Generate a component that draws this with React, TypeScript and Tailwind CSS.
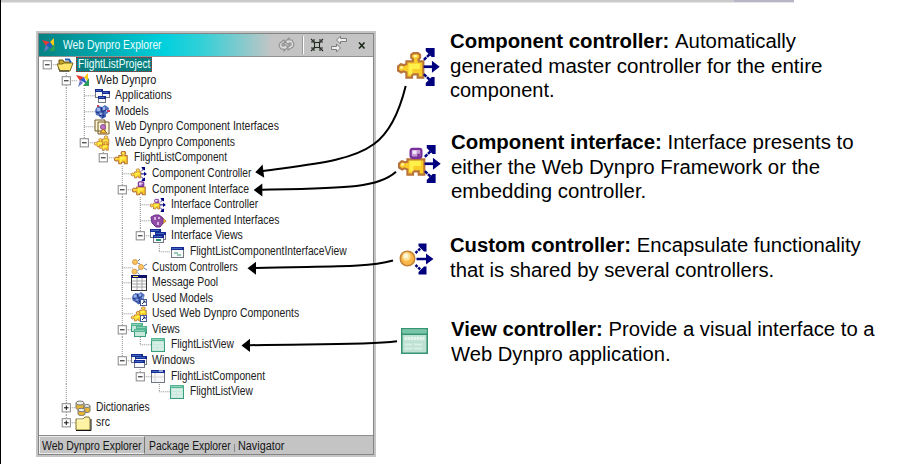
import React from "react";

type IconName =
  | "logo" | "folderOpen" | "apps" | "models" | "interfaces" | "components" | "component"
  | "controller" | "compInterface" | "ifController" | "implemented" | "ifViews" | "ifView"
  | "custom" | "pool" | "usedModels" | "usedComponents" | "views" | "view" | "windows"
  | "window" | "dictionaries" | "folder";

const NAVY = "#00007f";

function ControllerArrows() {
  return (
    <g stroke={NAVY} fill={NAVY}>
      <path d="M9.9 6.9h4" strokeWidth="1" />
      <path d="M13 4.7l2.9 2.2L13 9.1z" stroke="none" />
      <path d="M10 4.4l2.8-2.8M10 9.6l2.8 2.8" fill="none" strokeWidth=".9" strokeDasharray="1.3 .35" />
      <path d="M10.7 0H14v3.3h-1.1l-2.2-2.2zM10.7 14H14v-3.3h-1.1l-2.2 2.2z" stroke="none" />
    </g>
  );
}

function Puzzle({ purple = false }: { purple?: boolean }) {
  return (
    <g>
      <path
        d={purple
          ? "M3.5 5.3h6.3v5.6H7.7V9.7H5.6v1.2H3.5V9L2.4 8.6l-.8.4-1.2-.7V6.8l1-.8 1.1.3 1-.1z"
          : "M3.5 4.9h2.4l.1-.7L5.3 3.6V2.5l.8-.6h1.7l.8.6v1.1l-.6.6.1.7h1.7v6H7.7V9.7H5.6v1.2H3.5V9L2.4 8.6l-.8.4-1.2-.7V6.8l1-.8 1.1.3 1-.3z"}
        fill="#f9cc27" stroke="#b8743a" strokeWidth=".8"
      />
      <path d="M4.3 5.8h4.2v1.9H4.3zM4.3 7.5h1.4v2.3H4.3z" fill="#fff04a" />
      <path d="M1.2 6.8h1v.8h-1z" fill="#fff8ae" />
      {!purple && <path d="M6.2 2.6h1.2v.8H6.2z" fill="#fff8ae" />}
      {purple && (
        <g>
          <rect x="4.7" y="1.4" width="4" height="3.3" rx=".7" fill="#c79fd4" stroke="#78309a" strokeWidth=".85" />
          <path d="M5.4 2h1.5v1.3H5.4z" fill="#f4e5fa" />
          <path d="M7.2 3.2h.9v1.6h-.9z" fill="#78309a" />
        </g>
      )}
    </g>
  );
}

function Win({ x, y, w, h, green = false }: { x: number; y: number; w: number; h: number; green?: boolean }) {
  return (
    <g>
      <rect x={x + 0.5} y={y + 0.5} width={w - 1} height={h - 1} fill={green ? "#c7e8dc" : "#f8f8fa"} stroke={green ? "#39a07b" : "#717684"} />
      <rect x={x} y={y} width={w} height="3" fill={green ? "#55b491" : "#152a92"} />
      <rect x={x + 1} y={y + 1} width={w - 3} height="1" fill={green ? "#8ed1b8" : "#4268bd"} />
    </g>
  );
}

function Cells() {
  return (
    <g>
      <path d="M1 3l3-2 3 1 3-2 4 3-1 5-2 1v3l-4 2-3-3-3-1-1-4z" fill="#506fbd" />
      <path d="M2 3h3v3H2zM8 2h2v3H8zM5 8h3v3H5zM11 5h2v2h-2z" fill="#9cb5ed" />
      <path d="M1 7l3 1M6 2l1 5 4-2M8 7v6M4 11l3-1 3 1" stroke="#1a2c80" fill="none" />
    </g>
  );
}

function Shortcut() {
  return <g><rect x="9.5" y="9.5" width="6" height="6" fill="#fff" stroke="#445b9e" /><path d="M11 14l3-3M12 11h2v2" stroke="#182a70" fill="none" /></g>;
}

function Icon({ name }: { name: IconName }) {
  let art: React.ReactNode = null;
  switch (name) {
    case "logo":
      art = <g><path d="M1 3l8 2-4 4z" fill="#e73a31" /><path d="M9 5l4-4v9z" fill="#ffcb18" /><path d="M5 8l4-3 3 7z" fill="#2d59c6" /><path d="M14 6v8H8z" fill="#2b9c57" /><path d="M5 8l-2 7 5-4z" fill="#6b78c8" /></g>;
      break;
    case "folderOpen":
      art = <g><path d="M2 13V3h4l1 2h6v3" fill="#cba724" stroke="#68571b" /><path d="M0 7h5l2-1h9l-3 8H3z" fill="#ffe66a" stroke="#76631d" /><path d="M8 2.5h4l2 3" fill="none" stroke="#2760b2" strokeWidth="2" /><path d="M2 14h10" stroke="#222" /></g>;
      break;
    case "apps":
      art = <g><Win x={1} y={1} w={8} h={9} /><Win x={8} y={3} w={8} h={7} /><Win x={4} y={8} w={8} h={7} /></g>;
      break;
    case "models": art = <g transform="translate(1 1)"><Cells /><path d="M2 0h2v2H2zM12 5h3v2h-3z" fill="#c8405c" /></g>; break;
    case "interfaces":
      art = <g><path d="M1 1h10v11H1zM4 3h11v12H4z" fill="#fff8d7" stroke="#71592b" /><circle cx="9" cy="8" r="2.5" fill="#bb73c6" stroke="#8c4b98" /><path d="M6 14l3-4 4 4z" fill="#ffcc36" stroke="#a66b29" /></g>;
      break;
    case "components":
      art = <g><g transform="translate(5 -1)"><Puzzle /></g><g transform="translate(0 2) scale(.9)"><Puzzle /></g><g transform="translate(5 5) scale(.95)"><Puzzle /></g></g>;
      break;
    case "component": art = <g transform="translate(1 -1) scale(1.35)"><Puzzle /></g>; break;
    case "controller": art = <g transform="translate(0 1)"><Puzzle /><ControllerArrows /></g>; break;
    case "compInterface": art = <g transform="translate(1 -1) scale(1.35)"><Puzzle purple /></g>; break;
    case "ifController": art = <g transform="translate(0 1)"><Puzzle purple /><ControllerArrows /></g>; break;
    case "implemented":
      art = <g><path d="M10 3l6 5-6 5z" fill="#ffda30" stroke="#be782b" /><path d="M1 4l4-2 4 0 4 3v5l-3 4H6l-4-4z" fill="#914da6" stroke="#68318c" /><path d="M4 4h2v3H4zM8 4h2v2H8zM7 9h2v3H7z" fill="#d8afe1" /></g>;
      break;
    case "ifViews":
      art = <g><Win x={0} y={1} w={11} h={9} /><Win x={5} y={4} w={11} h={8} /><Win x={3} y={7} w={11} h={8} /><path d="M6 12h5" stroke="#26956f" strokeWidth="2" /></g>;
      break;
    case "ifView": art = <g><Win x={2} y={3} w={13} h={11} /><path d="M5 9h4M8 11h4" stroke="#389a73" /></g>; break;
    case "custom":
      art = <g fill="#ffc65e" stroke="#c98b3c" strokeWidth=".8"><circle cx="4" cy="3" r="2.5" /><circle cx="3.5" cy="12.5" r="2.5" /><circle cx="10" cy="8" r="2.5" /><path d="M7 2l2-2M7 4l2 1M6.5 11.5l2-1M6.5 13.5l2 2M13 7l3-2M13 9l3 2" fill="none" stroke="#3058aa" /></g>;
      break;
    case "pool":
      art = <g><rect x=".5" y=".5" width="15" height="15" fill="#fff" stroke="#333" /><path d="M0 0h16v3H0z" fill="#10136c" /><path d="M2 1h5v1H2z" fill="#ffe94d" /><path d="M1 6h14M1 9h14M1 12h14M6 3v12M11 3v12" stroke="#a4a4a4" fill="none" /></g>;
      break;
    case "usedModels": art = <g><g transform="translate(1 2) scale(.9)"><Cells /></g><Shortcut /></g>; break;
    case "usedComponents": art = <g><g transform="translate(5 -1) scale(1.05)"><Puzzle /></g><g transform="translate(0 4)"><Puzzle /></g><Shortcut /></g>; break;
    case "views": art = <g><Win x={0} y={1} w={12} h={9} green /><Win x={5} y={4} w={11} h={8} green /><Win x={3} y={7} w={12} h={8} green /></g>; break;
    case "view": art = <g><Win x={1} y={1} w={14} h={14} green /><path d="M3 6h10M3 9h4M8 9h5M3 12h4M8 12h5" stroke="#e6f7f0" /></g>; break;
    case "windows": art = <g><Win x={0} y={1} w={12} h={9} /><Win x={4} y={3} w={12} h={9} /><Win x={3} y={7} w={11} h={8} /></g>; break;
    case "window": art = <g><Win x={1} y={2} w={14} h={13} /><path d="M5 5v9M2 9h12" stroke="#d4d4d4" /><path d="M9 3h4" stroke="#fff" /></g>; break;
    case "dictionaries":
      art = <g fill="#e9b833" stroke="#777"><path d="M1 3v5c0 2 8 2 8 0V3" /><ellipse cx="5" cy="3" rx="4" ry="2" fill="#eee" /><path d="M9 6v5c0 2 6 2 6 0V6" /><ellipse cx="12" cy="6" rx="3" ry="1.5" fill="#eee" /><path d="M3 10v4c0 2 7 2 7 0v-4" /><ellipse cx="6.5" cy="10" rx="3.5" ry="1.7" fill="#eee" /></g>;
      break;
    case "folder": art = <g><path d="M1 15V4h7l2-2h4l1 2v11z" fill="#fff3a3" stroke="#806f2d" /><path d="M1 15.5h15V4" stroke="#111" fill="none" /><path d="M2 5h7" stroke="#fffddb" /></g>; break;
  }
  return <svg className="block h-[16px] w-[16px] shrink-0 overflow-visible" viewBox="0 0 16 16">{art}</svg>;
}

type Row = { text: string; level: number; icon: IconName; width: number; toggle?: "-" | "+"; selected?: boolean };

const rows: Row[] = [
  { text: "FlightListProject", level: 0, icon: "folderOpen", width: 72, toggle: "-", selected: true },
  { text: "Web Dynpro", level: 1, icon: "logo", width: 60, toggle: "-" },
  { text: "Applications", level: 2, icon: "apps", width: 57 },
  { text: "Models", level: 2, icon: "models", width: 34 },
  { text: "Web Dynpro Component Interfaces", level: 2, icon: "interfaces", width: 164 },
  { text: "Web Dynpro Components", level: 2, icon: "components", width: 120, toggle: "-" },
  { text: "FlightListComponent", level: 3, icon: "component", width: 93, toggle: "-" },
  { text: "Component Controller", level: 4, icon: "controller", width: 99 },
  { text: "Component Interface", level: 4, icon: "compInterface", width: 97, toggle: "-" },
  { text: "Interface Controller", level: 5, icon: "ifController", width: 87 },
  { text: "Implemented Interfaces", level: 5, icon: "implemented", width: 108 },
  { text: "Interface Views", level: 5, icon: "ifViews", width: 72, toggle: "-" },
  { text: "FlightListComponentInterfaceView", level: 6, icon: "ifView", width: 157 },
  { text: "Custom Controllers", level: 4, icon: "custom", width: 86 },
  { text: "Message Pool", level: 4, icon: "pool", width: 66 },
  { text: "Used Models", level: 4, icon: "usedModels", width: 61 },
  { text: "Used Web Dynpro Components", level: 4, icon: "usedComponents", width: 147 },
  { text: "Views", level: 4, icon: "views", width: 28, toggle: "-" },
  { text: "FlightListView", level: 5, icon: "view", width: 63 },
  { text: "Windows", level: 4, icon: "windows", width: 43, toggle: "-" },
  { text: "FlightListComponent", level: 5, icon: "window", width: 94, toggle: "-" },
  { text: "FlightListView", level: 6, icon: "view", width: 63 },
  { text: "Dictionaries", level: 1, icon: "dictionaries", width: 54, toggle: "+" },
  { text: "src", level: 1, icon: "folder", width: 14, toggle: "+" },
];

// True when a later sibling exists at the given depth, so the guide continues down.
function continues(index: number, depth: number) {
  for (let i = index + 1; i < rows.length; i++) {
    if (rows[i].level < depth) return false;
    if (rows[i].level === depth) return true;
  }
  return false;
}

// Stretches or narrows a line of text to a fixed measure.
function Fit({ width, children, className = "" }: { width: number; children: React.ReactNode; className?: string }) {
  const ref = React.useRef<HTMLSpanElement>(null);
  const [ratio, setRatio] = React.useState(1);
  React.useLayoutEffect(() => {
    if (ref.current) setRatio(width / ref.current.offsetWidth);
  }, [width]);
  return (
    <span className={"block shrink-0 whitespace-nowrap " + className} style={{ width }}>
      <span ref={ref} className="inline-block origin-left" style={{ transform: `scaleX(${ratio})` }}>{children}</span>
    </span>
  );
}

function Guide({ index, depth }: { index: number; depth: number }) {
  const row = rows[index];
  const own = row.level === depth;
  const more = continues(index, depth);
  return (
    <svg className="block h-[15.59px] w-[18.65px] shrink-0 overflow-visible" viewBox="0 0 18.65 15.59">
      {depth > 0 && (own || more) && <path d={`M9.3 0V${more ? 15.6 : 7.8}`} stroke="#8c8c8c" strokeDasharray="1 1" />}
      {own && <path d="M9.3 7.8H20" stroke="#8c8c8c" strokeDasharray="1 1" />}
      {own && row.toggle && (
        <g>
          <rect x="5.2" y="3.7" width="8.2" height="8.2" fill="#fff" stroke="#888" />
          <path d={row.toggle === "+" ? "M7 7.8h4.6M9.3 5.5v4.6" : "M7 7.8h4.6"} stroke="#111" />
        </g>
      )}
    </svg>
  );
}

function Explorer() {
  return (
    <section className="flex h-[426px] w-[340px] shrink-0 flex-col border-2 border-[#c5c5c5] bg-white">
      <div className="flex min-h-0 flex-1 flex-col border border-[#858585]">
        <header className="flex h-[23px] shrink-0 items-center border-b border-[#929292] bg-[linear-gradient(90deg,#078182_0px,#00a7ae_60px,#00d0dd_125px,#36d0d7_165px,#c4c4c4_233px)] pl-[2px]">
          <Icon name="logo" />
          <Fit width={99} className="ml-[6px] text-[12px] leading-[18px] text-[#e9ffff]">Web Dynpro Explorer</Fit>
          <svg className="ml-auto block h-[20px] w-[98px]" viewBox="0 0 98 20" fill="none">
            <g stroke="#8e8e8e" strokeWidth="1.1" fill="#dedede">
              <path d="M9 5l-4 3-1 3 2 3 3 0v2l4-4-4-3v2H7l0-2 3-2z" />
              <path d="M13 15l5-3 1-3-2-4h-3V3l-4 4 4 3V8h2v2l-3 2z" />
            </g>
            <path d="M28.5 1v18" stroke="#fff" /><path d="M27.5 1v18" stroke="#999" />
            <g stroke="#222b20" strokeWidth="1.1">
              <rect x="39.5" y="7.5" width="5" height="5" />
              <path d="M36 4l3 3M48 4l-3 3M36 16l3-3M48 16l-3-3" />
              <path d="M39 4v3h-3M45 4v3h3M36 13h3v3M48 13h-3v3" />
            </g>
            <g fill="#eeeeee" stroke="#7d7d7d">
              <path d="M61.5 5l4-4v2.5h6v3h-6V9z" />
              <path d="M56.5 11.5h5V9l4 4-4 4v-2.500h-5z" />
            </g>
            <path d="M84 7.500l5.500 6M89.500 7.500l-5.500 6" stroke="#182a16" strokeWidth="1.6" />
          </svg>
        </header>
        <div className="min-h-0 flex-1 text-[12px] leading-[15.59px] text-[#202020]">
          {rows.map((row, i) => (
            <div key={i} className="-ml-[0.8px] flex h-[15.59px] items-center">
              <div className="flex shrink-0">
                {Array.from({ length: row.level + 1 }, (_, d) => <Guide key={d} index={i} depth={d} />)}
              </div>
              <div className="w-[18.65px] shrink-0"><Icon name={row.icon} /></div>
              {row.selected ? (
                <div className="ml-px flex h-[15px] items-center border border-dotted border-[#b02525] bg-[#087f7e] px-px text-[#e8ffff]">
                  <Fit width={row.width}>{row.text}</Fit>
                </div>
              ) : (
                <Fit width={row.width} className="ml-[2.2px]">{row.text}</Fit>
              )}
            </div>
          ))}
        </div>
        <footer className="flex h-[19px] shrink-0 items-center border-t border-[#8d8d8d] bg-[#c4c4c4] text-[12px] leading-[18px] text-[#161616]">
          <div className="h-[18px] w-[106px] border border-r-[#777] border-b-[#e9e9e9] border-l-[#eee] border-t-[#e9e9e9] pl-[2px]"><Fit width={100}>Web Dynpro Explorer</Fit></div>
          <Fit width={82} className="ml-[4px] pt-px">Package Explorer</Fit>
          <span className="ml-[3px] mt-[5px] block h-[8px] w-px bg-[#888]" />
          <Fit width={46} className="ml-[3px] pt-px">Navigator</Fit>
        </footer>
      </div>
    </section>
  );
}

function BigController({ kind }: { kind: "puzzle" | "interface" | "custom" }) {
  if (kind === "custom") {
    return (
      <svg className="block h-[34px] w-[36px]" viewBox="0 0 36 34">
        <circle cx="8.500" cy="16.500" r="7.200" fill="#f9b74a" stroke="#c38235" strokeWidth="1.6" />
        <circle cx="7.500" cy="14.500" r="4.2" fill="#ffe09a" /><path d="M5 12h4v4H5z" fill="#fff6d6" />
        <g stroke={NAVY} fill={NAVY}>
          <path d="M17.500 17h11" strokeWidth="2.500" /><path d="M27 11.500v11l7.500-5.500z" stroke="none" />
          <path d="M16.500 11l6-5.500M16.500 23l6 5.500" fill="none" strokeWidth="2.500" strokeDasharray="2.7 1" />
          <path d="M19.500 1.500h8v8H25l-5.500-5.500zM19.500 32.500h8v-8H25l-5.500 5.500z" stroke="none" />
        </g>
      </svg>
    );
  }
  return (
    <svg className="block h-[38px] w-[43px]" viewBox="0 0 16 14" preserveAspectRatio="none">
      <Puzzle purple={kind === "interface"} /><ControllerArrows />
    </svg>
  );
}

function Note({ icon, lines, title }: { icon: React.ReactNode; title: string; lines: [string, number][] }) {
  return (
    <article className="flex items-start">
      <div className="w-[53px] shrink-0">{icon}</div>
      <div className="text-[20px] leading-[24.7px] text-black">
        {lines.map(([text, width], i) => (
          <Fit key={i} width={width}>{i === 0 && <b>{title} </b>}{text}</Fit>
        ))}
      </div>
    </article>
  );
}

export default function App() {
  return (
    <main className="relative h-[464px] w-[909px] overflow-hidden border-l border-black bg-white font-['Liberation_Sans',Arial,sans-serif]">
      <div className="flex h-[3px] w-[793px] border-b border-[#e8e3e4] bg-[#c8cbcb]">
        <div className="ml-auto w-[60px] bg-[#b7b6c6]" />
      </div>
      <div className="flex pl-[35px] pt-[26px]">
        <div className="shrink-0 pt-[2px]"><Explorer /></div>
        <div className="flex flex-col pl-[21px]">
          <div className="h-[101px]">
            <Note title="Component controller:" icon={<div className="pt-[19px]"><BigController kind="puzzle" /></div>} lines={[["Automatically", 346], ["generated master controller for the entire", 372], ["component.", 105]]} />
          </div>
          <div className="h-[103px] pl-px">
            <Note title="Component interface:" icon={<div className="pt-[15px]"><BigController kind="interface" /></div>} lines={[["Interface presents to", 403], ["either the Web Dynpro Framework or the", 369], ["embedding controller.", 195]]} />
          </div>
          <div className="h-[84px]">
            <Note title="Custom controller:" icon={<div className="pl-[2px] pt-[9px]"><BigController kind="custom" /></div>} lines={[["Encapsulate functionality", 411], ["that is shared by several controllers.", 324]]} />
          </div>
          <div className="pl-px">
            <Note
              title="View controller:"
              icon={
                <svg className="ml-[3px] mt-[11px] block h-[26px] w-[27px]" viewBox="0 0 27 26">
                  <path d="M.8.8h25.4v24.4H.8z" fill="#bfe1d4" stroke="#359472" strokeWidth="1.6" />
                  <path d="M1.6 1.6h23.8v3.8H1.6z" fill="#76c5a8" /><path d="M1 6.2h25" stroke="#359472" strokeWidth="1.6" />
                  <path d="M3.500 10.500h20" stroke="#e4f4ee" strokeWidth="3.500" strokeDasharray="2.500 .5" />
                  <path d="M3.500 16.500h8M13 16.500h8M3.500 20.500h8M13 20.500h8" stroke="#d8efe6" strokeWidth="2.200" />
                </svg>
              }
              lines={[["Provide a visual interface to a", 424], ["Web Dynpro application.", 220]]}
            />
          </div>
        </div>
      </div>
      <svg className="pointer-events-none absolute -left-px top-0 h-[464px] w-[909px]" viewBox="0 0 909 464" fill="none" stroke="#000" strokeWidth="2">
        <path d="M405.7 86C399 113 388 134 374 144C351 161 313 164 263 171" />
        <path d="M396 171.7C378 188 347 188 262 189.7" />
        <path d="M393 260.5C365 268 332 266 255 268" />
        <path d="M397 341.3C365 345 325 344 250 345.2" />
        <g fill="#000" stroke="none">
          <path d="M255.3 172.3l7.3-7.8 1.6 13.2z" /><path d="M253.7 190l8.6-6.5v13z" />
          <path d="M247.5 268.2l8.5-6.5v13z" /><path d="M241.5 345.4l8.5-6.6v13.2z" />
        </g>
      </svg>
    </main>
  );
}
